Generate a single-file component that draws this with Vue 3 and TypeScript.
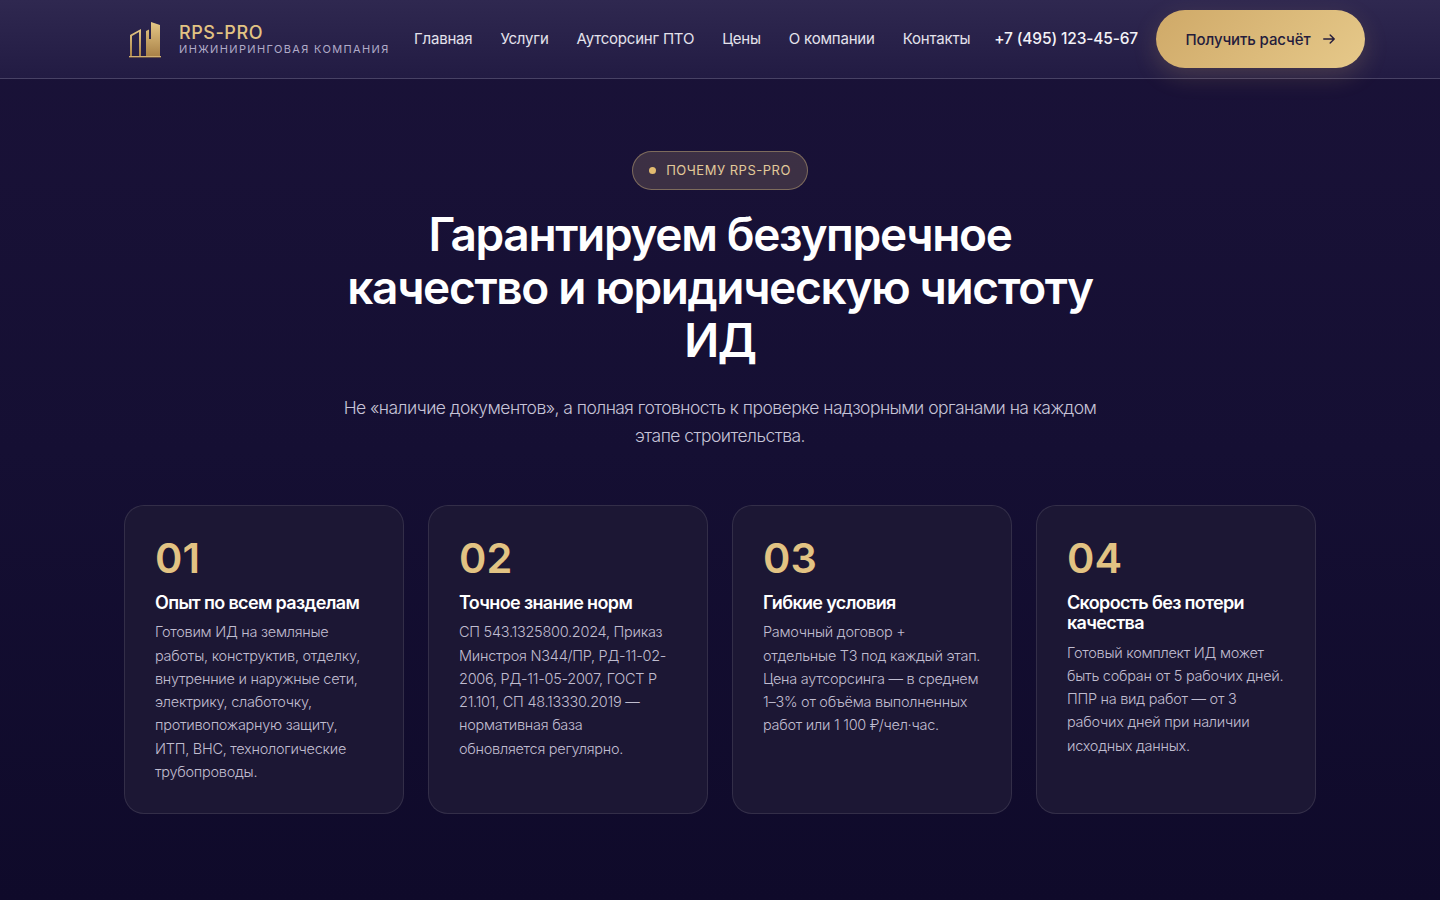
<script setup lang="ts">
const navLinks = ['Главная', 'Услуги', 'Аутсорсинг ПТО', 'Цены', 'О компании', 'Контакты'];

// строки разбиты вручную, чтобы переносы не зависели от шрифта
const cards = [
  {
    num: '01',
    title: 'Опыт по всем разделам',
    lines: [
      'Готовим ИД на земляные',
      'работы, конструктив, отделку,',
      'внутренние и наружные сети,',
      'электрику, слаботочку,',
      'противопожарную защиту,',
      'ИТП, ВНС, технологические',
      'трубопроводы.'
    ]
  },
  {
    num: '02',
    title: 'Точное знание норм',
    lines: [
      'СП 543.1325800.2024, Приказ',
      'Минстроя N344/ПР, РД-11-02-',
      '2006, РД-11-05-2007, ГОСТ Р',
      '21.101, СП 48.13330.2019 —',
      'нормативная база',
      'обновляется регулярно.'
    ]
  },
  {
    num: '03',
    title: 'Гибкие условия',
    lines: [
      'Рамочный договор +',
      'отдельные ТЗ под каждый этап.',
      'Цена аутсорсинга — в среднем',
      '1–3% от объёма выполненных',
      'работ или 1 100 ₽/чел·час.'
    ]
  },
  {
    num: '04',
    title: 'Скорость без потери качества',
    lines: [
      'Готовый комплект ИД может',
      'быть собран от 5 рабочих дней.',
      'ППР на вид работ — от 3',
      'рабочих дней при наличии',
      'исходных данных.'
    ]
  }
];
</script>

<template>
  <div class="page">
    <header class="header">
      <div class="header-inner">
        <a class="brand" href="#">
          <svg class="logo" width="34" height="38" viewBox="0 0 34 38" fill="none">
            <defs>
              <linearGradient id="logoGold" x1="0" y1="0" x2="0" y2="1">
                <stop offset="0" stop-color="#e6c886" />
                <stop offset="1" stop-color="#a98248" />
              </linearGradient>
            </defs>
            <path d="M2 36V15L13 9V36H11V12L4 16V36Z" fill="url(#logoGold)" />
            <path d="M18 36V11l3-1.500V19h2V2l9 3v31Z" fill="url(#logoGold)" />
            <rect x="1" y="36" width="32" height="1.500" fill="url(#logoGold)" />
          </svg>
          <span class="brand-text">
            <span class="brand-name">RPS-PRO</span>
            <span class="brand-sub">ИНЖИНИРИНГОВАЯ КОМПАНИЯ</span>
          </span>
        </a>
        <nav class="nav">
          <a v-for="link in navLinks" :key="link" href="#">{{ link }}</a>
        </nav>
        <a class="phone" href="#">+7 (495) 123-45-67</a>
        <a class="cta" href="#">
          Получить расчёт
          <svg width="14" height="14" viewBox="0 0 24 24" fill="none" stroke="currentColor" stroke-width="2.400" stroke-linecap="round" stroke-linejoin="round">
            <path d="M3 12h18M14 5l7 7-7 7" />
          </svg>
        </a>
      </div>
    </header>

    <section class="why">
      <div class="pill"><span class="dot"></span>ПОЧЕМУ RPS-PRO</div>
      <h2 class="title">Гарантируем безупречное качество и юридическую чистоту ИД</h2>
      <p class="lead">Не «наличие документов», а полная готовность к проверке надзорными органами на каждом этапе строительства.</p>

      <div class="grid">
        <article v-for="card in cards" :key="card.num" class="card">
          <div class="num">{{ card.num }}</div>
          <h3>{{ card.title }}</h3>
          <p>
            <span v-for="line in card.lines" :key="line">{{ line }}</span>
          </p>
        </article>
      </div>
    </section>
  </div>
</template>

<style>
html, body {
  background: #0f0a2a;
}
</style>

<style scoped>
.page {
  min-height: 900px;
  font-family: Inter, "Noto Sans", sans-serif;
  color: #fff;
  background: linear-gradient(180deg, #1a1238 0%, #150f33 50%, #0f0a2a 100%);
}

.header {
  height: 78px;
  border-bottom: 1px solid rgba(255, 255, 255, 0.12);
  background: linear-gradient(180deg, #2f2850 0%, #221b43 100%);
}

.header-inner {
  height: 100%;
  padding: 0 75px 0 128px;
  display: flex;
  align-items: center;
}

.brand {
  display: flex;
  align-items: center;
  gap: 17px;
  flex-shrink: 0;
  text-decoration: none;
}

.logo {
  flex-shrink: 0;
}

.brand-text {
  display: flex;
  flex-direction: column;
  width: 210px;
  white-space: nowrap;
}

.brand-name {
  font-size: 18px;
  line-height: 19px;
  font-weight: 500;
  letter-spacing: 0.55px;
  color: #e2c383;
}

.brand-sub {
  font-size: 11px;
  line-height: 14px;
  letter-spacing: 1.360px;
  color: #b0abc8;
}

.nav {
  display: flex;
  gap: 28px;
  margin-left: 25px;
  margin-top: -2px;
  flex-shrink: 0;
  white-space: nowrap;
}

.nav a {
  font-size: 15px;
  letter-spacing: -0.2px;
  color: #e4e2ec;
  text-decoration: none;
}

.phone {
  margin-left: 24px;
  margin-top: -2px;
  font-size: 15.500px;
  font-weight: 500;
  letter-spacing: -0.15px;
  color: #f3f2f7;
  text-decoration: none;
  white-space: nowrap;
  flex-shrink: 0;
}

.cta {
  margin-left: 18px;
  width: 209px;
  height: 58px;
  flex-shrink: 0;
  border-radius: 29px;
  display: flex;
  align-items: center;
  justify-content: center;
  gap: 11px;
  font-size: 15px;
  font-weight: 500;
  letter-spacing: -0.1px;
  color: #241c3c;
  text-decoration: none;
  background: linear-gradient(135deg, #cfa968 0%, #e6c98a 100%);
  box-shadow: 0 8px 24px rgba(214, 177, 110, 0.2);
}

.why {
  width: 1192px;
  margin: 0 auto;
  padding-top: 72px;
  display: flex;
  flex-direction: column;
  align-items: center;
}

.pill {
  height: 39px;
  box-sizing: border-box;
  padding: 0 16px 2px;
  display: flex;
  align-items: center;
  gap: 10px;
  border-radius: 20px;
  border: 1px solid rgba(226, 195, 131, 0.4);
  background: rgba(226, 195, 131, 0.18);
  font-size: 13px;
  letter-spacing: 0.5px;
  color: #e2c99a;
}

.dot {
  width: 7px;
  height: 7px;
  margin-top: 2px;
  border-radius: 50%;
  background: #e2bb70;
}

.title {
  width: 780px;
  margin: 18px 0 0;
  font-size: 46px;
  line-height: 53px;
  font-weight: 600;
  letter-spacing: -1.350px;
  text-align: center;
  color: #fff;
}

.lead {
  width: 780px;
  margin: 27px 0 0;
  font-size: 17.500px;
  line-height: 28px;
  font-weight: 300;
  letter-spacing: -0.54px;
  text-align: center;
  color: #c7c4d8;
}

.grid {
  width: 100%;
  margin-top: 55px;
  display: grid;
  grid-template-columns: repeat(4, 1fr);
  gap: 24px;
}

.card {
  height: 309px;
  box-sizing: border-box;
  padding: 29px 30px 0;
  border-radius: 20px;
  border: 1px solid rgba(255, 255, 255, 0.1);
  background: #1c1734;
}

.num {
  font-size: 41.500px;
  line-height: 46px;
  font-weight: 600;
  color: #e2c383;
}

.card h3 {
  margin: 12px 0 0;
  font-size: 18px;
  line-height: 20.300px;
  font-weight: 600;
  letter-spacing: -0.65px;
  color: #fff;
}

.card p {
  margin: 7.100px 0 0;
  font-size: 14.500px;
  line-height: 23.250px;
  font-weight: 300;
  letter-spacing: -0.27px;
  color: #c0bdd0;
}

.card p span {
  display: block;
  white-space: nowrap;
}
</style>
